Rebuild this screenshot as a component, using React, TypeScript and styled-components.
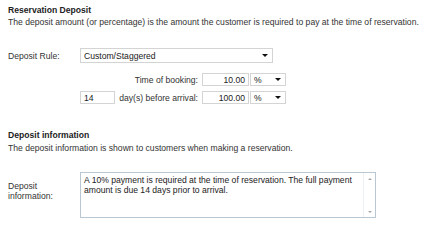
import React from "react";
import styled, { createGlobalStyle } from "styled-components";

const Global = createGlobalStyle`
  html, body { margin: 0; padding: 0; background: #ffffff; }
  body { font-family: "Liberation Sans", Arial, sans-serif; color: #333333; }
`;

const Page = styled.div`
  padding: 4px 8px 0 8px;
  font-size: 8.6px;
  line-height: 12px;
`;

const Heading = styled.div`
  font-weight: bold;
  color: #222222;
`;

const Desc = styled.div<{ $top?: number }>`
  margin-top: ${(p) => p.$top ?? 0}px;
`;

const Section = styled.div<{ $top: number }>`
  margin-top: ${(p) => p.$top}px;
`;

const FormRow = styled.div<{ $top: number; $align?: string }>`
  display: grid;
  grid-template-columns: 72px auto;
  align-items: ${(p) => p.$align || "center"};
  margin-top: ${(p) => p.$top}px;
`;

const Label = styled.div`
  color: #333333;
`;

const Field = styled.div`
  box-sizing: border-box;
  border: 1px solid #d4d4d4;
  background: #ffffff;
  height: 13px;
  display: flex;
  align-items: center;
  color: #222222;
`;

const Select = styled(Field)<{ $w: number }>`
  width: ${(p) => p.$w}px;
  padding: 0 4px 0 3px;
  justify-content: space-between;
`;

const SelectBig = styled(Select)`
  height: 15px;
`;

const Arrow = styled.span`
  width: 0;
  height: 0;
  border-left: 3px solid transparent;
  border-right: 3px solid transparent;
  border-top: 3px solid #111111;
`;

const Input = styled(Field)<{ $w: number; $right?: boolean }>`
  width: ${(p) => p.$w}px;
  padding: 0 3px;
  justify-content: ${(p) => (p.$right ? "flex-end" : "flex-start")};
`;

const Sub = styled.div`
  display: flex;
  align-items: center;
`;

const Slot = styled.div`
  width: 35px;
  display: flex;
`;

const SubLabel = styled.div`
  width: 87px;
  text-align: right;
  padding-right: 4px;
  box-sizing: border-box;
  white-space: nowrap;
`;

const Pair = styled.div`
  display: flex;
  gap: 1px;
`;

const TextBox = styled.div`
  box-sizing: border-box;
  width: 296px;
  height: 46px;
  border: 1px solid #b9c7d3;
  display: flex;
  background: #ffffff;
`;

const TextContent = styled.div`
  flex: 1;
  padding: 2px 3px;
  color: #222222;
  line-height: 10px;
`;

const Scroll = styled.div`
  width: 12px;
  display: flex;
  flex-direction: column;
  justify-content: space-between;
  align-items: center;
  padding: 5px 0 4px;
  box-sizing: border-box;
  border-left: 1px solid #eef1f4;
`;

const ScrollArrow = styled.span<{ $up?: boolean }>`
  width: 0;
  height: 0;
  border-left: 2px solid transparent;
  border-right: 2px solid transparent;
  ${(p) =>
    p.$up
      ? "border-bottom: 2px solid #a8a8a8;"
      : "border-top: 2px solid #a8a8a8;"}
`;

const TwoLine = styled.div`
  line-height: 10px;
  padding-top: 9px;
`;

export default function App() {
  return (
    <>
      <Global />
      <Page>
        <Heading>Reservation Deposit</Heading>
        <Desc>
          The deposit amount (or percentage) is the amount the customer is required to pay at the time of reservation.
        </Desc>

        <FormRow $top={20}>
          <Label>Deposit Rule:</Label>
          <SelectBig $w={193}>
            <span>Custom/Staggered</span>
            <Arrow />
          </SelectBig>
        </FormRow>

        <FormRow $top={10}>
          <span />
          <Sub>
            <Slot />
            <SubLabel>Time of booking:</SubLabel>
            <Pair>
              <Input $w={47} $right>10.00</Input>
              <Select $w={36}>
                <span>%</span>
                <Arrow />
              </Select>
            </Pair>
          </Sub>
        </FormRow>

        <FormRow $top={5}>
          <span />
          <Sub>
            <Slot>
              <Input $w={35}>14</Input>
            </Slot>
            <SubLabel>day(s) before arrival:</SubLabel>
            <Pair>
              <Input $w={47} $right>100.00</Input>
              <Select $w={36}>
                <span>%</span>
                <Arrow />
              </Select>
            </Pair>
          </Sub>
        </FormRow>

        <Section $top={25}>
          <Heading>Deposit information</Heading>
          <Desc $top={1}>The deposit information is shown to customers when making a reservation.</Desc>
        </Section>

        <FormRow $top={18} $align="start">
          <TwoLine>
            Deposit
            <br />
            information:
          </TwoLine>
          <TextBox>
            <TextContent>
              A 10% payment is required at the time of reservation. The full payment amount is due 14 days prior to arrival.
            </TextContent>
            <Scroll>
              <ScrollArrow $up />
              <ScrollArrow />
            </Scroll>
          </TextBox>
        </FormRow>
      </Page>
    </>
  );
}
